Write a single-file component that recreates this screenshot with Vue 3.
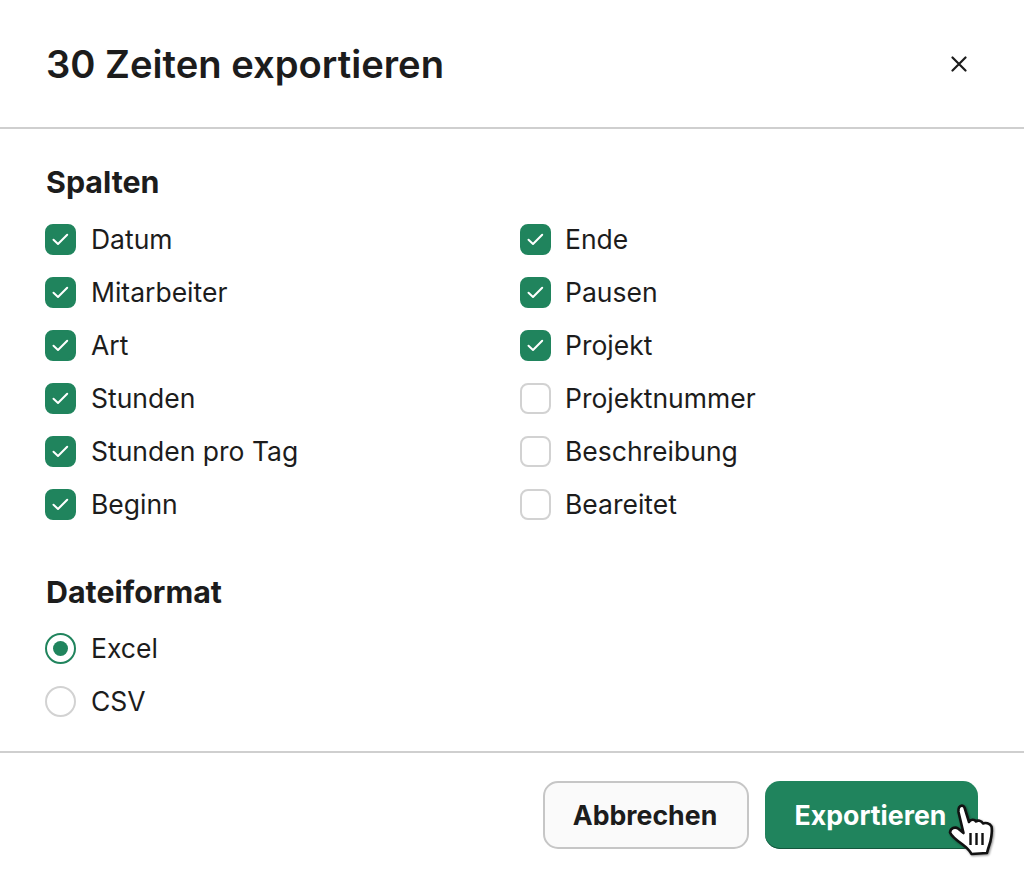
<script setup>
const left = [
  { label: 'Datum', on: true },
  { label: 'Mitarbeiter', on: true },
  { label: 'Art', on: true },
  { label: 'Stunden', on: true },
  { label: 'Stunden pro Tag', on: true },
  { label: 'Beginn', on: true },
]
const right = [
  { label: 'Ende', on: true },
  { label: 'Pausen', on: true },
  { label: 'Projekt', on: true },
  { label: 'Projektnummer', on: false },
  { label: 'Beschreibung', on: false },
  { label: 'Beareitet', on: false },
]
const columns = [left, right]
</script>

<template>
  <div class="dialog">
    <header class="head">
      <h1 class="title">30 Zeiten exportieren</h1>
      <svg class="close" width="16" height="16" viewBox="0 0 16 16">
        <path d="M1.500 1.500 14.500 14.500M14.500 1.500 1.500 14.500" stroke="#1c1c1c" stroke-width="2.200" stroke-linecap="round" fill="none" />
      </svg>
    </header>
    <main class="body">
      <h2 class="section">Spalten</h2>
      <div class="grid">
        <div v-for="(col, i) in columns" :key="i" class="col">
          <div v-for="item in col" :key="item.label" class="row">
            <span class="box" :class="{ on: item.on }">
              <svg v-if="item.on" width="19" height="15" viewBox="0 0 19 15">
                <path d="M2.500 7.800 7 12 16.200 2.800" stroke="#fff" stroke-width="2" stroke-linecap="round" stroke-linejoin="round" fill="none" />
              </svg>
            </span>
            <span class="label">{{ item.label }}</span>
          </div>
        </div>
      </div>
      <h2 class="section second">Dateiformat</h2>
      <div class="row">
        <span class="radio on"><i class="dot"></i></span>
        <span class="label">Excel</span>
      </div>
      <div class="row">
        <span class="radio"></span>
        <span class="label">CSV</span>
      </div>
    </main>
    <footer class="foot">
      <button class="btn ghost">Abbrechen</button>
      <button class="btn primary">Exportieren</button>
      <svg class="cursor" width="52" height="60" viewBox="0 0 52 60">
        <path d="M14 7.500C15.500 5 18.500 5 19.500 7.500L24 22C25.500 19 29.500 19 31 21.500C32.500 20 36.500 20.500 38 23.500C40 22.500 45 23 46.500 26.500C47.500 31 46 41 44 46C43 49 42.500 51 42 53L26.500 54C24.500 50 21 47 17 44C12 40.500 7 37 5 32.500C5.500 28 10 26.500 13 28.500L18.500 33L13.500 12C13.300 10 13.500 8.500 14 7.500Z" fill="#fff" stroke="#111" stroke-width="2.600" stroke-linejoin="round" />
        <path d="M25.500 33V45M31.500 33V45M37.500 33V45" stroke="#111" stroke-width="2.400" fill="none" />
      </svg>
    </footer>
  </div>
</template>

<style>
html, body { margin: 0; background: #fff; }
</style>

<style scoped>
.dialog {
  width: 1024px;
  height: 880px;
  box-sizing: border-box;
  font-family: Inter, "Liberation Sans", sans-serif;
  color: #1c1c1c;
  background: #fff;
  overflow: hidden;
}
.head {
  height: 129px;
  box-sizing: border-box;
  border-bottom: 2px solid #cfcfcf;
  padding: 0 57px 0 46px;
  display: flex;
  align-items: center;
  justify-content: space-between;
}
.title {
  margin: 0;
  font-size: 38.2px;
  font-weight: 600;
  line-height: 44px;
}
.close { display: block; }
.body {
  padding: 33px 45px 0;
  height: 624px;
  box-sizing: border-box;
  border-bottom: 2px solid #cfcfcf;
}
.section {
  margin: 0 0 11px;
  padding-left: 1px;
  font-size: 30.400px;
  font-weight: 700;
  line-height: 40px;
}
.section.second { margin: 41px 0 10px; }
.grid {
  display: grid;
  grid-template-columns: 475px 1fr;
}
.row {
  height: 53px;
  display: flex;
  align-items: center;
  gap: 15px;
  font-size: 26.500px;
}
.col + .col .row { gap: 14px; }
.label { margin-top: -2px; }
.box, .radio {
  width: 31px;
  height: 31px;
  box-sizing: border-box;
  flex: none;
  display: flex;
  align-items: center;
  justify-content: center;
  border: 2px solid #d2d2d2;
  background: #fff;
}
.box { border-radius: 8px; }
.box.on { background: #20845d; border-color: #20845d; }
.radio { border-radius: 50%; }
.radio.on { border-color: #20845d; }
.dot {
  width: 15px;
  height: 15px;
  border-radius: 50%;
  background: #20845d;
}
.foot {
  position: relative;
  display: flex;
  justify-content: flex-end;
  gap: 16px;
  padding: 28px 46px 0;
}
.btn {
  height: 68px;
  border-radius: 15px;
  font-family: inherit;
  font-size: 26.700px;
  font-weight: 700;
  box-sizing: border-box;
  padding: 0 2px 0 0;
}
.ghost {
  width: 206px;
  background: #fafafa;
  color: #1c1c1c;
  border: 2px solid #c6c6c6;
}
.primary {
  width: 213px;
  background: #20845d;
  color: #fff;
  border: none;
  box-shadow: inset 0 -1px 0 #14573d;
}
.cursor {
  position: absolute;
  left: 945px;
  top: 47px;
  filter: drop-shadow(1px 1px 1px rgba(0, 0, 0, .45));
}
</style>
